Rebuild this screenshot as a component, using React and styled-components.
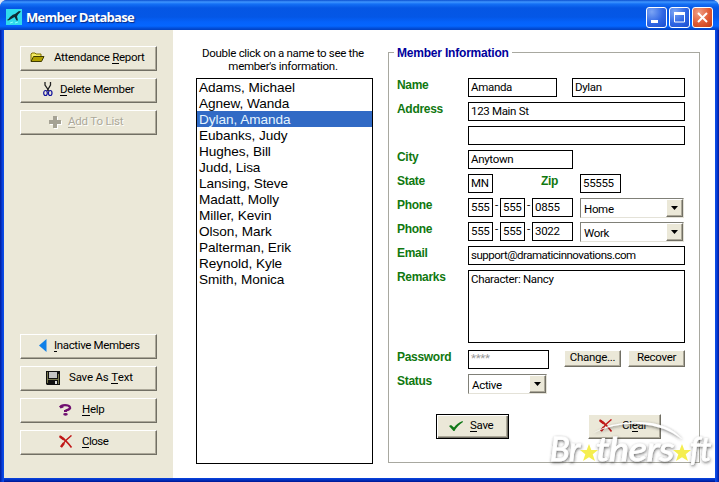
import React from "react";
import styled, { createGlobalStyle, css } from "styled-components";

const Global = createGlobalStyle`
  * { box-sizing: border-box; }
  body { margin: 0; background: #dfe6f5; overflow: hidden; }
`;

const Window = styled.div`
  position: relative;
  width: 719px;
  height: 482px;
  display: flex;
  flex-direction: column;
  font: 11.5px/13px Roboto, "Liberation Sans", Arial, sans-serif;
  letter-spacing: -0.32px;
  color: #000;
  border-radius: 7px 7px 0 0;
  overflow: hidden;
  background: #0a3fd6;
`;

const TitleBar = styled.header`
  height: 30px;
  flex: none;
  display: flex;
  align-items: center;
  padding: 3px 6px 0 6px;
  background: linear-gradient(#0a4fd0 0, #3f96ff 2px, #1470f5 4px, #0556e4 8px, #0457e6 17px, #0562fb 22px, #0566ff 26px, #0350dc 28px, #0240c0 30px);
`;

const Title = styled.h1`
  margin: 0 auto 0 4px;
  font: bold 13px/16px "Open Sans", "Noto Sans", sans-serif;
  letter-spacing: -0.75px;
  color: #fff;
  text-shadow: 1px 1px 1px #0a2a80;
`;

const Caption = styled.button`
  width: 21px;
  height: 21px;
  margin: 1px 0 0 2px;
  padding: 0;
  border: 1px solid #fff;
  border-radius: 3px;
  background: ${(p) => (p.$close
    ? "radial-gradient(circle at 30% 25%, #f0a088, #e05a34 55%, #c03a14)"
    : "radial-gradient(circle at 25% 20%, #7ba4f4, #2f66e4 55%, #1c4ed0)")};
  svg { display: block; }
`;

const Body = styled.div`
  flex: 1;
  display: flex;
  margin: 0 4px;
  background: #fff;
  min-height: 0;
`;

const Frame = styled.div`
  height: 4px;
  flex: none;
  background: linear-gradient(#0a45e0, #0030c0 50%, #001590);
`;

const Edge = styled.div`
  position: absolute;
  top: 30px;
  bottom: 0;
  width: 4px;
  ${(p) => (p.$right ? "right: 0" : "left: 0")};
  background: linear-gradient(${(p) => (p.$right ? "90deg" : "270deg")}, #0a50e8, #0840dc 40%, #001c9c);
`;

const Sidebar = styled.nav`
  width: 169px;
  flex: none;
  padding: 16px 16px 23px;
  background: #ebe8d8;
  display: flex;
  flex-direction: column;
  gap: 7px;
`;

const Spacer = styled.div`
  flex: 1;
`;

const raised = css`
  background: #ebe8d8;
  border: 1px solid;
  border-color: #fff #716f64 #716f64 #fff;
  box-shadow: inset -1px -1px 0 #aca899;
`;

const PushButton = styled.button`
  ${raised};
  display: flex;
  align-items: center;
  width: ${(p) => p.$w || 137}px;
  height: ${(p) => p.$h || 25}px;
  flex: none;
  margin: 0 0 0 ${(p) => p.$ml || 0}px;
  padding: 0 0 2px ${(p) => p.$pad}px;
  gap: ${(p) => p.$gap || 0}px;
  font: inherit;
  letter-spacing: ${(p) => p.$ls ?? -0.3}px;
  white-space: nowrap;
  color: ${(p) => (p.$off ? "#aca899" : "#000")};
  ${(p) => p.$off && "text-shadow: 1px 1px 0 #fff;"}
  ${(p) => p.$primary && "border-color: #000; box-shadow: inset 1px 1px 0 #fff, inset -1px -1px 0 #716f64, inset -2px -2px 0 #aca899;"}
  svg { flex: none; display: block; }
`;

const Accel = styled.span`
  border-bottom: 1px solid currentColor;
  display: inline-block;
  height: 13px;
  line-height: 13px;
`;

const ListPane = styled.section`
  width: 177px;
  margin: 17px 0 0 23px;
  flex: none;
`;

const Hint = styled.p`
  margin: 0 -8px;
  height: 31px;
  text-align: center;
  line-height: 13px;
  letter-spacing: -0.3px;
  span { display: block; padding-right: 3px; }
`;

const NameList = styled.ul`
  margin: 0;
  padding: 0;
  height: 386px;
  border: 1px solid #000;
  list-style: none;
`;

const NameRow = styled.li`
  height: 16px;
  padding-left: 2px;
  font: 13.6px/17px "Liberation Sans", Arial, sans-serif;
  letter-spacing: -0.06px;
  color: ${(p) => (p.$on ? "#e4f4ff" : "#000")};
  background: ${(p) => (p.$on ? "#316ac5" : "transparent")};
`;

const Group = styled.fieldset`
  margin: 15px 0 0 15px;
  width: 312px;
  height: 418px;
  min-width: 0;
  flex: none;
  padding: 0 0 0 7px;
  border: 1px solid #a8a8a0;
  display: flex;
  flex-direction: column;
`;

const Legend = styled.legend`
  padding: 0 3px;
  margin-left: -2px;
  height: 15px;
  font: bold 12px/16px "Liberation Sans", Arial, sans-serif;
  letter-spacing: -0.2px;
  color: #00009c;
`;

const Rows = styled.div`
  display: flex;
  flex-direction: column;
  gap: 4px;
  padding-top: 18px;
`;

const FormRow = styled.div`
  display: flex;
  align-items: flex-start;
  height: ${(p) => p.$h || 20}px;
`;

const Label = styled.label`
  width: ${(p) => p.$w || 72}px;
  margin-left: ${(p) => p.$ml || 0}px;
  padding-left: 1px;
  flex: none;
  font: bold 12px/14px "Liberation Sans", Arial, sans-serif;
  letter-spacing: -0.3px;
  color: #107810;
`;

const Field = styled.div`
  width: ${(p) => p.$w}px;
  height: ${(p) => p.$h || 19}px;
  margin-left: ${(p) => p.$ml || 0}px;
  flex: none;
  border: 1px solid #000;
  padding: ${(p) => (p.$dim ? 1 : 2)}px 0 0 2px;
  letter-spacing: ${(p) => p.$ls ?? -0.32}px;
  white-space: nowrap;
  color: ${(p) => (p.$dim ? "#999" : "#000")};
`;

const Dash = styled.span`
  width: 7px;
  flex: none;
  text-align: center;
  line-height: 15px;
`;

const Combo = styled.div`
  width: ${(p) => p.$w}px;
  height: 20px;
  margin-left: ${(p) => p.$ml || 0}px;
  flex: none;
  display: flex;
  justify-content: space-between;
  border: 1px solid;
  border-color: #808078 #e4e2d8 #e4e2d8 #808078;
  padding-left: 3px;
  line-height: 20px;
`;

const Arrow = styled.span`
  ${raised};
  width: 17px;
  height: 18px;
  display: flex;
  align-items: center;
  justify-content: center;
`;

const Small = styled(PushButton)`
  justify-content: center;
`;

const Actions = styled.div`
  display: flex;
  padding: 20px 0 0 40px;
  gap: 79px;
`;

const Watermark = styled.svg`
  position: absolute;
  left: 545px;
  top: 416px;
`;

const FolderIcon = () => (
  <svg width="15" height="11" viewBox="0 0 15 11">
    <path d="M1 9V2l1-1h3l1 1h5v2" fill="#f4ec60" stroke="#807000" />
    <path d="M1 9.500 3.500 4.500H14L11.500 9.500z" fill="#b0a000" stroke="#403c00" />
  </svg>
);
const ScissorsIcon = () => (
  <svg width="10" height="15" viewBox="0 0 10 15" fill="none">
    <path d="M2 0v3l4 6M7.500 0v3L4 9" stroke="#222" strokeWidth="1.300" />
    <ellipse cx="2.500" cy="11" rx="1.800" ry="2.500" stroke="#10109c" strokeWidth="1.200" />
    <ellipse cx="7.200" cy="11" rx="1.800" ry="2.500" stroke="#10109c" strokeWidth="1.200" />
  </svg>
);
const PlusIcon = () => (
  <svg width="14" height="14" viewBox="0 0 14 14">
    <path d="M5 1h4v4h4v4H9v4H5V9H1V5h4z" fill="#fff" transform="translate(1 1)" />
    <path d="M5 1h4v4h4v4H9v4H5V9H1V5h4z" fill="#a5a294" />
  </svg>
);
const LeftIcon = () => (
  <svg width="8" height="13" viewBox="0 0 8 13"><path d="M7.500 0v13L0 6.500z" fill="#1080e8" /></svg>
);
const DiskIcon = () => (
  <svg width="14" height="14" viewBox="0 0 14 14">
    <path d="M0 0h14v14H1L0 13z" fill="#111" />
    <path d="M1 1h1v11H1zM12 3h1v10h-1zM2 8h10v1H2z" fill="#77774c" />
    <path d="M3 1h8v6H3z" fill="#c4c4c4" />
    <path d="M9 10h2v3H9z" fill="#ddd" />
  </svg>
);
const HelpIcon = () => (
  <svg width="13" height="12" viewBox="0 0 13 12">
    <path d="M1.500 3Q2 1.200 6 1.200t5 2-4.500 3.300" fill="none" stroke="#701070" strokeWidth="2.300" />
    <path d="M0 2h4.500v1.500L1.500 4.500zM5 6h3v2H5z" fill="#701070" />
    <ellipse cx="6.500" cy="10.300" rx="2.300" ry="1.400" fill="#701070" />
  </svg>
);
const CrossIcon = () => (
  <svg width="14" height="13" viewBox="0 0 14 13" fill="none" stroke="#c01818">
    <path d="M.5 1Q7 5 12.500 12.500" strokeWidth="1.600" />
    <path d="M12.500 .5Q6 5 2 12" strokeWidth="1.500" />
    <path d="M1 1.500l4 3M2 12l3-4" strokeWidth="2.400" />
  </svg>
);
const CheckIcon = () => (
  <svg width="14" height="10" viewBox="0 0 14 10">
    <path d="M0 5l2-1 3 2.500Q8 2 13.500 0L14 1Q8 5 5.500 10H4.500z" fill="#107818" />
  </svg>
);
const Triangle = () => (
  <svg width="7" height="4" viewBox="0 0 7 4"><path d="M0 0h7L3.500 4z" /></svg>
);
const AppIcon = () => (
  <svg width="16" height="16" viewBox="0 0 16 16">
    <path d="M0 0h16v16H0z" fill="#30dcec" />
    <path d="M1 11q2-1 3-3 3-3 5-3l4-3 2 .5-3 3-1 2 1 4h-1.500L8.500 8 6 9.500 3.500 11 2 11.500z" fill="#102c34" />
    <path d="M4 14l3-1M9 14l3-1" stroke="#8ff" />
  </svg>
);

const names = [
  "Adams, Michael", "Agnew, Wanda", "Dylan, Amanda", "Eubanks, Judy",
  "Hughes, Bill", "Judd, Lisa", "Lansing, Steve", "Madatt, Molly",
  "Miller, Kevin", "Olson, Mark", "Palterman, Erik", "Reynold, Kyle",
  "Smith, Monica",
];

const star = "M0-9 2.300-3 9-3 3.700 1.300 6 8 0 4.200-6 8-3.700 1.300-9-3-2.300-3z";

export default function App() {
  return (
    <Window>
      <Global />
      <TitleBar>
        <AppIcon />
        <Title>Member Database</Title>
        <Caption><svg width="19" height="19"><path d="M4 12h7v3H4z" fill="#fff" /></svg></Caption>
        <Caption><svg width="19" height="19"><path d="M4.500 5h10v9h-10z" fill="none" stroke="#fff" /><path d="M4 4h11v3H4z" fill="#fff" /></svg></Caption>
        <Caption $close><svg width="19" height="19"><path d="M5 5l9 9M14 5l-9 9" stroke="#fff" strokeWidth="2" /></svg></Caption>
      </TitleBar>
      <Body>
        <Sidebar>
          <PushButton $pad={9} $gap={9}><FolderIcon /><span>Attendance <Accel>R</Accel>eport</span></PushButton>
          <PushButton $pad={22} $gap={7}><ScissorsIcon /><span><Accel>D</Accel>elete Member</span></PushButton>
          <PushButton $pad={27} $gap={6} $ls={-0.2} $off><PlusIcon /><span><Accel>A</Accel>dd To List</span></PushButton>
          <Spacer />
          <PushButton $pad={18} $gap={7} $ls={-0.36}><LeftIcon /><span><Accel>I</Accel>nactive Members</span></PushButton>
          <PushButton $pad={25} $gap={9} $ls={-0.2}><DiskIcon /><span>Save As <Accel>T</Accel>ext</span></PushButton>
          <PushButton $pad={38} $gap={10}><HelpIcon /><span><Accel>H</Accel>elp</span></PushButton>
          <PushButton $pad={38} $gap={9} $ls={-0.5}><CrossIcon /><span><Accel>C</Accel>lose</span></PushButton>
        </Sidebar>
        <ListPane>
          <Hint><span>Double click on a name to see the</span><span>member's information.</span></Hint>
          <NameList>
            {names.map((n) => <NameRow key={n} $on={n === "Dylan, Amanda"}>{n}</NameRow>)}
          </NameList>
        </ListPane>
        <Group>
          <Legend>Member Information</Legend>
          <Rows>
            <FormRow><Label>Name</Label><Field $w={89}>Amanda</Field><Field $w={113} $ml={15}>Dylan</Field></FormRow>
            <FormRow><Label>Address</Label><Field $w={217}>123 Main St</Field></FormRow>
            <FormRow><Label /><Field $w={217} /></FormRow>
            <FormRow><Label>City</Label><Field $w={105}>Anytown</Field></FormRow>
            <FormRow><Label>State</Label><Field $w={25}>MN</Field><Label $ml={47} $w={40}>Zip</Label><Field $w={41}>55555</Field></FormRow>
            <FormRow><Label>Phone</Label><Field $w={25}>555</Field><Dash>-</Dash><Field $w={25}>555</Field><Dash>-</Dash><Field $w={41}>0855</Field><Combo $w={104} $ml={7}>Home<Arrow><Triangle /></Arrow></Combo></FormRow>
            <FormRow><Label>Phone</Label><Field $w={25}>555</Field><Dash>-</Dash><Field $w={25}>555</Field><Dash>-</Dash><Field $w={41}>3022</Field><Combo $w={104} $ml={7}>Work<Arrow><Triangle /></Arrow></Combo></FormRow>
            <FormRow><Label>Email</Label><Field $w={217} $ls={-0.5}>support@dramaticinnovations.com</Field></FormRow>
            <FormRow $h={76}><Label>Remarks</Label><Field $w={217} $h={73}>Character: Nancy</Field></FormRow>
            <FormRow><Label>Password</Label><Field $w={81} $dim>****</Field><Small $ml={15} $w={57} $h={17} $pad={0}>Change...</Small><Small $ml={7} $w={57} $h={17} $pad={0}>Recover</Small></FormRow>
            <FormRow><Label>Status</Label><Combo $w={79}>Active<Arrow><Triangle /></Arrow></Combo></FormRow>
          </Rows>
          <Actions>
            <PushButton $primary $w={73} $pad={12} $gap={7}><CheckIcon /><span><Accel>S</Accel>ave</span></PushButton>
            <PushButton $w={73} $pad={10} $gap={9}><CrossIcon /><span>Cl<Accel>e</Accel>ar</span></PushButton>
          </Actions>
        </Group>
      </Body>
      <Frame />
      <Edge />
      <Edge $right />
      <Watermark width="174" height="60" viewBox="545 416 174 60">
        <defs>
          <filter id="soft" x="-10%" y="-20%" width="120%" height="150%">
            <feDropShadow dx=".5" dy="1.200" stdDeviation="1.500" floodColor="#333" floodOpacity=".75" />
          </filter>
        </defs>
        <g filter="url(#soft)" fill="#fff" stroke="#fff" strokeWidth=".8" fontFamily="Lato, sans-serif" fontStyle="italic" fontWeight="400" fontSize="33">
          <path stroke="none" d="M593 433Q612 421.500 640 422T682 439Q664 425.500 640 424T593 433z" />
          <text x="550" y="461" textLength="30" lengthAdjust="spacingAndGlyphs">Br</text>
          <text x="596" y="461" textLength="78" lengthAdjust="spacingAndGlyphs">thers</text>
          <text x="690" y="461" textLength="21" lengthAdjust="spacingAndGlyphs">ft</text>
        </g>
        <path d={star} transform="translate(589 453)" fill="#f5ee50" />
        <path d={star} transform="translate(682 453)" fill="#f5ee50" />
      </Watermark>
    </Window>
  );
}
